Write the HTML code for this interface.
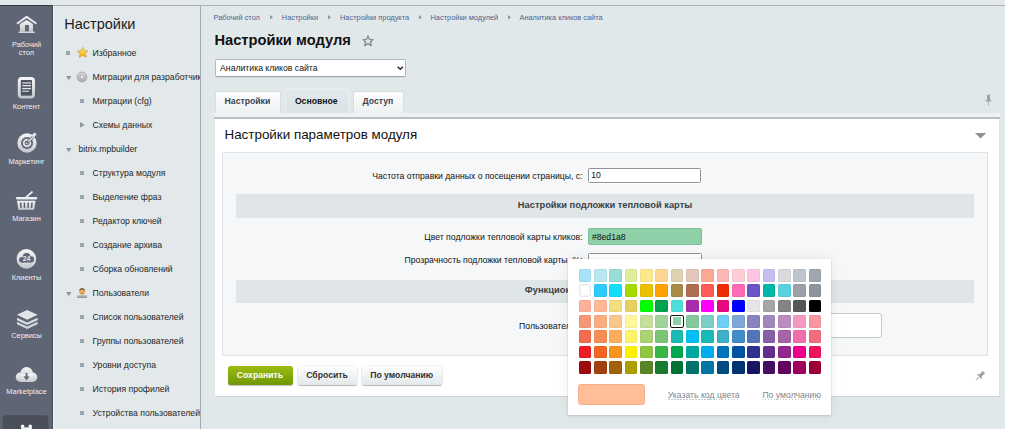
<!DOCTYPE html>
<html><head><meta charset="utf-8"><style>
html,body{margin:0;padding:0;width:1024px;height:429px;overflow:hidden;background:#fff}
body{position:relative;font-family:"Liberation Sans", sans-serif}
.t{position:absolute;white-space:nowrap}
.r{position:absolute}
</style></head><body>
<div class="r" style="left:0.00px;top:0.00px;width:1024.00px;height:429.00px;background:#fff"></div><div class="r" style="left:0.00px;top:0.00px;width:1005.00px;height:429.00px;background:#e1e8ea"></div><div class="r" style="left:0.00px;top:0.00px;width:1005.00px;height:5.00px;background:#e3e9eb"></div><div class="r" style="left:0.00px;top:5.00px;width:53.00px;height:424.00px;background:#5e6575"></div><div class="r" style="left:0.00px;top:5.00px;width:53.00px;height:1.00px;background:#323744"></div><div class="r" style="left:52.00px;top:5.00px;width:1.00px;height:424.00px;background:#454b58"></div><div class="r" style="left:53.00px;top:6.00px;width:1.00px;height:423.00px;background:#f2f5f6"></div><div class="r" style="left:53.00px;top:5.00px;width:952.00px;height:1.00px;background:#a9b1b4"></div><div class="r" style="left:54.00px;top:6.00px;width:146.00px;height:423.00px;background:#e3e9eb"></div><div class="r" style="left:200.00px;top:6.00px;width:1.00px;height:423.00px;background:#9dadbd"></div><div class="t" style="left:-13.50px;width:80px;text-align:center;top:40.64px;font-size:7.4px;line-height:7.4px;color:#eef1f4">Рабочий</div><div class="t" style="left:-13.50px;width:80px;text-align:center;top:49.04px;font-size:7.4px;line-height:7.4px;color:#eef1f4">стол</div><div class="t" style="left:-13.50px;width:80px;text-align:center;top:103.04px;font-size:7.4px;line-height:7.4px;color:#eef1f4">Контент</div><div class="t" style="left:-13.50px;width:80px;text-align:center;top:157.94px;font-size:7.4px;line-height:7.4px;color:#eef1f4">Маркетинг</div><div class="t" style="left:-13.50px;width:80px;text-align:center;top:215.04px;font-size:7.4px;line-height:7.4px;color:#eef1f4">Магазин</div><div class="t" style="left:-13.50px;width:80px;text-align:center;top:273.64px;font-size:7.4px;line-height:7.4px;color:#eef1f4">Клиенты</div><div class="t" style="left:-13.50px;width:80px;text-align:center;top:332.24px;font-size:7.4px;line-height:7.4px;color:#eef1f4">Сервисы</div><div class="t" style="left:-13.50px;width:80px;text-align:center;top:387.54px;font-size:7.4px;line-height:7.4px;color:#eef1f4">Marketplace</div>
<svg class="r" style="left:0;top:0" width="53" height="429" viewBox="0 0 53 429">
 <defs>
  <linearGradient id="g1" x1="0" y1="0" x2="0" y2="1"><stop offset="0" stop-color="#f4f5f6"/><stop offset="1" stop-color="#c4c7cc"/></linearGradient>
 </defs>
 <!-- house -->
 <path d="M17.6 23.2 L26.6 16.9 L35.8 23.2" fill="none" stroke="#e9ebee" stroke-width="1.9" stroke-linecap="round" stroke-linejoin="round"/>
 <path d="M19.9 24 L26.6 19.9 L33 24 L33 31.8 L19.9 31.8 Z" fill="url(#g1)"/>
 <rect x="25" y="25" width="3.9" height="6.8" fill="#5f6676"/>
 <rect x="18.4" y="31.6" width="16.4" height="1.5" rx="0.6" fill="#d5d8dc"/>
 <!-- content doc -->
 <rect x="19.3" y="78.5" width="14.2" height="18.5" rx="2.6" fill="none" stroke="url(#g1)" stroke-width="3"/>
 <rect x="21" y="80.2" width="10.8" height="15.2" fill="#4d5360"/>
 <rect x="22.2" y="82.3" width="8.8" height="1.3" fill="#d7dadd"/>
 <rect x="22.2" y="85" width="8.8" height="1.3" fill="#e6e8eb"/>
 <rect x="22.2" y="87.9" width="8.8" height="1.3" fill="#e6e8eb"/>
 <rect x="22.2" y="90.6" width="6.7" height="1.3" fill="#c9ccd0"/>
 <!-- marketing target -->
 <circle cx="27" cy="143" r="9.7" fill="url(#g1)"/>
 <circle cx="27" cy="143" r="6.0" fill="#5e6575"/>
 <circle cx="27" cy="143" r="4.3" fill="#d9dbdf"/>
 <circle cx="27" cy="143" r="2.3" fill="#5e6575"/>
 <circle cx="27" cy="143" r="1.3" fill="#cfd2d6"/>
 <path d="M27 143 L34.5 135.5" stroke="#5e6575" stroke-width="3"/>
 <path d="M28.3 141.7 L34.3 135.7" stroke="#e6e8eb" stroke-width="1.3"/>
 <path d="M31.5 135.2 L34.6 132.4 L36.6 134.4 L33.8 137.5 Z" fill="#e6e8eb"/>
 <!-- basket -->
 <path d="M26.4 197 L32 192" stroke="#e6e8eb" stroke-width="1.8" stroke-linecap="round"/>
 <rect x="15.9" y="196.9" width="21.4" height="2.5" rx="1.1" fill="#eceef0"/>
 <path d="M17 200.7 L35.5 200.7 L34.1 209.8 L18.4 209.8 Z" fill="url(#g1)"/>
 <path d="M19.8 202.5 L21.4 202.5 L21.8 208 L20.3 208 Z" fill="#5e6575"/>
 <path d="M23.6 202.5 L25.1 202.5 L25.2 208 L23.8 208 Z" fill="#5e6575"/>
 <path d="M27.5 202.5 L29 202.5 L28.8 208 L27.4 208 Z" fill="#5e6575"/>
 <path d="M31.2 202.5 L32.8 202.5 L32.3 208 L30.8 208 Z" fill="#5e6575"/>
 <!-- clients -->
 <circle cx="26.4" cy="258.9" r="9.8" fill="url(#g1)"/>
 <g fill="#5e6575"><circle cx="21.9" cy="259.7" r="2.8"/><circle cx="26.6" cy="256.9" r="3.8"/><circle cx="31" cy="259.3" r="3.1"/><rect x="21.9" y="258" width="9.1" height="4.5"/></g>
 <text x="26.6" y="261.2" font-family="Liberation Sans" font-size="6.8" font-weight="bold" fill="#e8eaed" text-anchor="middle">24</text>
 <!-- services layers -->
 <path d="M17 321.8 L27.1 326.6 L37.6 321.8 L37.6 324.2 L27.1 329 L17 324.2 Z" fill="#d3d6da"/>
 <path d="M17 317.8 L27.1 322.6 L37.6 317.8 L37.6 320.2 L27.1 325 L17 320.2 Z" fill="#d8dade"/>
 <path d="M27.1 309.9 L37.6 314.8 L27.1 319.7 L17 314.8 Z" fill="#e2e4e7"/>
 <!-- marketplace cloud -->
 <g fill="url(#g1)"><circle cx="20.6" cy="377.2" r="4.8"/><circle cx="26.6" cy="373.5" r="6.4"/><circle cx="32.6" cy="377.3" r="4.7"/><rect x="20.6" y="374" width="12" height="8"/></g>
 <rect x="25.6" y="373" width="1.9" height="4.5" fill="#5e6575"/>
 <path d="M23.4 376.6 L29.7 376.6 L26.55 380.2 Z" fill="#5e6575"/>
 <!-- bottom box -->
 <rect x="3.3" y="415.7" width="44.7" height="30" rx="2.2" fill="#4a4f5b" stroke="#41464f" stroke-width="0.6"/>
 <g fill="#f4f5f6"><circle cx="22.6" cy="426.2" r="1.7"/><circle cx="30.2" cy="426.2" r="1.7"/><path d="M21 426.5 L21.3 429 L31.8 429 L32 426.5 Q26.4 429.5 21 426.5 Z"/><rect x="22.6" y="427.4" width="7.6" height="1.6"/></g>
</svg><div class="t" style="left:64.30px;top:16.93px;font-size:14.5px;line-height:14.5px;color:#1c1c1c;font-weight:normal;">Настройки</div><div class="r" style="left:54px;top:6px;width:146px;height:423px;overflow:hidden"><div class="r" style="left:12.00px;top:45.00px;width:4.20px;height:3.70px;background:#9ca4ab"></div><svg class="r" style="left:22.599999999999994px;top:41.40px" width="11.5" height="11" viewBox="0 0 11 10.5"><defs><linearGradient id="sg" x1="0" y1="0" x2="0" y2="1"><stop offset="0" stop-color="#ffe680"/><stop offset="1" stop-color="#f0b010"/></linearGradient></defs><path d="M5.5 0.4 L7.1 3.5 L10.5 3.9 L8 6.3 L8.8 9.8 L5.5 8.1 L2.2 9.8 L3 6.3 L0.5 3.9 L3.9 3.5 Z" fill="url(#sg)" stroke="#d49a1c" stroke-width="0.7" stroke-linejoin="round"/></svg><div class="t" style="left:38.50px;top:42.76px;font-size:8.67px;line-height:8.67px;color:#262626;font-weight:normal;white-space:nowrap">Избранное</div><svg class="r" style="left:11.70px;top:69.80px" width="6" height="5"><path d="M0 0 L5.5 0 L2.75 4.3 Z" fill="#8e969d"/></svg><svg class="r" style="left:22.099999999999994px;top:64.80px" width="12" height="12" viewBox="0 0 12 12"><defs><linearGradient id="gg" x1="0" y1="0" x2="0" y2="1"><stop offset="0" stop-color="#e2e4e6"/><stop offset="1" stop-color="#a9adb1"/></linearGradient></defs><path d="M9.70 4.61 L10.90 5.01 L10.90 6.99 L9.70 7.39 L9.60 7.63 L10.17 8.76 L8.76 10.17 L7.63 9.60 L7.39 9.70 L6.99 10.90 L5.01 10.90 L4.61 9.70 L4.37 9.60 L3.24 10.17 L1.83 8.76 L2.40 7.63 L2.30 7.39 L1.10 6.99 L1.10 5.01 L2.30 4.61 L2.40 4.37 L1.83 3.24 L3.24 1.83 L4.37 2.40 L4.61 2.30 L5.01 1.10 L6.99 1.10 L7.39 2.30 L7.63 2.40 L8.76 1.83 L10.17 3.24 L9.60 4.37Z" fill="url(#gg)" stroke="#8d9297" stroke-width="0.7" stroke-linejoin="round"/><circle cx="6" cy="6" r="1.9" fill="#f3f4f5" stroke="#8d9297" stroke-width="0.7"/></svg><div class="t" style="left:38.50px;top:66.76px;font-size:8.67px;line-height:8.67px;color:#262626;font-weight:normal;white-space:nowrap">Миграции для разработчика</div><div class="r" style="left:26.00px;top:93.00px;width:4.20px;height:3.70px;background:#9ca4ab"></div><div class="t" style="left:38.50px;top:90.76px;font-size:8.67px;line-height:8.67px;color:#262626;font-weight:normal;white-space:nowrap">Миграции (cfg)</div><svg class="r" style="left:25.90px;top:115.80px" width="5" height="6"><path d="M0 0 L4.8 2.9 L0 5.8 Z" fill="#8e969d"/></svg><div class="t" style="left:38.50px;top:114.76px;font-size:8.67px;line-height:8.67px;color:#262626;font-weight:normal;white-space:nowrap">Схемы данных</div><svg class="r" style="left:11.70px;top:141.80px" width="6" height="5"><path d="M0 0 L5.5 0 L2.75 4.3 Z" fill="#8e969d"/></svg><div class="t" style="left:24.50px;top:138.76px;font-size:8.67px;line-height:8.67px;color:#262626;font-weight:normal;white-space:nowrap">bitrix.mpbuilder</div><div class="r" style="left:26.00px;top:165.00px;width:4.20px;height:3.70px;background:#9ca4ab"></div><div class="t" style="left:38.50px;top:162.76px;font-size:8.67px;line-height:8.67px;color:#262626;font-weight:normal;white-space:nowrap">Структура модуля</div><div class="r" style="left:26.00px;top:189.00px;width:4.20px;height:3.70px;background:#9ca4ab"></div><div class="t" style="left:38.50px;top:186.76px;font-size:8.67px;line-height:8.67px;color:#262626;font-weight:normal;white-space:nowrap">Выделение фраз</div><div class="r" style="left:26.00px;top:213.00px;width:4.20px;height:3.70px;background:#9ca4ab"></div><div class="t" style="left:38.50px;top:210.76px;font-size:8.67px;line-height:8.67px;color:#262626;font-weight:normal;white-space:nowrap">Редактор ключей</div><div class="r" style="left:26.00px;top:237.00px;width:4.20px;height:3.70px;background:#9ca4ab"></div><div class="t" style="left:38.50px;top:234.76px;font-size:8.67px;line-height:8.67px;color:#262626;font-weight:normal;white-space:nowrap">Создание архива</div><div class="r" style="left:26.00px;top:261.00px;width:4.20px;height:3.70px;background:#9ca4ab"></div><div class="t" style="left:38.50px;top:258.76px;font-size:8.67px;line-height:8.67px;color:#262626;font-weight:normal;white-space:nowrap">Сборка обновлений</div><svg class="r" style="left:11.70px;top:285.80px" width="6" height="5"><path d="M0 0 L5.5 0 L2.75 4.3 Z" fill="#8e969d"/></svg><svg class="r" style="left:22.900000000000006px;top:281.50px" width="10.2" height="10.6" viewBox="0 0 10.2 10.6"><defs><linearGradient id="ug" x1="0" y1="0" x2="0" y2="1"><stop offset="0" stop-color="#d4d6d8"/><stop offset="1" stop-color="#7f8286"/></linearGradient><linearGradient id="fg" x1="0" y1="0" x2="0" y2="1"><stop offset="0" stop-color="#f5c68a"/><stop offset="1" stop-color="#d88e2c"/></linearGradient></defs><ellipse cx="5.1" cy="3.6" rx="2.8" ry="3.3" fill="url(#fg)"/><path d="M2.3 3 Q2.2 0.2 5.1 0.2 Q8 0.2 7.9 3 Q7.2 1.4 5.1 1.5 Q3 1.4 2.3 3 Z" fill="#5b4530"/><rect x="0" y="6.5" width="10" height="4" rx="1.4" fill="url(#ug)"/></svg><div class="t" style="left:38.50px;top:282.76px;font-size:8.67px;line-height:8.67px;color:#262626;font-weight:normal;white-space:nowrap">Пользователи</div><div class="r" style="left:26.00px;top:309.00px;width:4.20px;height:3.70px;background:#9ca4ab"></div><div class="t" style="left:38.50px;top:306.76px;font-size:8.67px;line-height:8.67px;color:#262626;font-weight:normal;white-space:nowrap">Список пользователей</div><div class="r" style="left:26.00px;top:333.00px;width:4.20px;height:3.70px;background:#9ca4ab"></div><div class="t" style="left:38.50px;top:330.76px;font-size:8.67px;line-height:8.67px;color:#262626;font-weight:normal;white-space:nowrap">Группы пользователей</div><div class="r" style="left:26.00px;top:357.00px;width:4.20px;height:3.70px;background:#9ca4ab"></div><div class="t" style="left:38.50px;top:354.76px;font-size:8.67px;line-height:8.67px;color:#262626;font-weight:normal;white-space:nowrap">Уровни доступа</div><div class="r" style="left:26.00px;top:381.00px;width:4.20px;height:3.70px;background:#9ca4ab"></div><div class="t" style="left:38.50px;top:378.76px;font-size:8.67px;line-height:8.67px;color:#262626;font-weight:normal;white-space:nowrap">История профилей</div><div class="r" style="left:26.00px;top:405.00px;width:4.20px;height:3.70px;background:#9ca4ab"></div><div class="t" style="left:38.50px;top:402.76px;font-size:8.67px;line-height:8.67px;color:#262626;font-weight:normal;white-space:nowrap">Устройства пользователей</div></div><div class="t" style="left:213.50px;top:13.84px;font-size:7.4px;line-height:7.4px;color:#4e6490;font-weight:normal;">Рабочий стол</div><div class="t" style="left:281.80px;top:13.84px;font-size:7.4px;line-height:7.4px;color:#4e6490;font-weight:normal;">Настройки</div><div class="t" style="left:340.00px;top:13.84px;font-size:7.4px;line-height:7.4px;color:#4e6490;font-weight:normal;">Настройки продукта</div><div class="t" style="left:430.50px;top:13.84px;font-size:7.4px;line-height:7.4px;color:#4e6490;font-weight:normal;">Настройки модулей</div><div class="t" style="left:519.50px;top:13.84px;font-size:7.4px;line-height:7.4px;color:#4e6490;font-weight:normal;">Аналитика кликов сайта</div><svg class="r" style="left:269.8px;top:15.2px" width="4" height="5"><path d="M0 0 L3 2.3 L0 4.6Z" fill="#8f979d"/></svg><svg class="r" style="left:328px;top:15.2px" width="4" height="5"><path d="M0 0 L3 2.3 L0 4.6Z" fill="#8f979d"/></svg><svg class="r" style="left:419px;top:15.2px" width="4" height="5"><path d="M0 0 L3 2.3 L0 4.6Z" fill="#8f979d"/></svg><svg class="r" style="left:508.2px;top:15.2px" width="4" height="5"><path d="M0 0 L3 2.3 L0 4.6Z" fill="#8f979d"/></svg><div class="t" style="left:214.40px;top:32.66px;font-size:14.7px;line-height:14.7px;color:#111;font-weight:bold;">Настройки модуля</div><svg class="r" style="left:361.8px;top:34.8px" width="12" height="12" viewBox="0 0 12 12"><path d="M6 1.0 L7.5 4.3 L11.0 4.6 L8.4 6.9 L9.2 10.6 L6 8.7 L2.8 10.6 L3.6 6.9 L1.0 4.6 L4.5 4.3 Z" fill="none" stroke="#868d94" stroke-width="1.35" stroke-linejoin="round"/></svg><div class="r" style="left:214.50px;top:58.90px;width:191.80px;height:17.70px;background:#fff;border:1px solid #b5babe;border-bottom-color:#9ea3a7;border-radius:2px;box-sizing:border-box;box-shadow:0 0.5px 0 rgba(0,0,0,.08)"></div><div class="t" style="left:220.10px;top:63.96px;font-size:8.67px;line-height:8.67px;color:#111;font-weight:normal;">Аналитика кликов сайта</div><svg class="r" style="left:397.3px;top:66px" width="7" height="4.5"><path d="M0.7 0.7 L3.3 3.3 L5.9 0.7" fill="none" stroke="#222" stroke-width="1.4"/></svg><div class="r" style="left:214.50px;top:91.00px;width:66.10px;height:22.30px;background:linear-gradient(#fdfefe,#eef1f2);border:1px solid #d8dde0;border-bottom:none;border-radius:2.5px 2.5px 0 0;box-sizing:border-box"></div><div class="r" style="left:285.20px;top:87.90px;width:63.60px;height:25.40px;background:linear-gradient(#e3e9eb,#dbe2e5);border:1px solid #e9eef0;border-bottom:none;border-radius:2.5px 2.5px 0 0;box-sizing:border-box"></div><div class="r" style="left:352.70px;top:91.00px;width:51.60px;height:22.30px;background:linear-gradient(#fdfefe,#eef1f2);border:1px solid #d8dde0;border-bottom:none;border-radius:2.5px 2.5px 0 0;box-sizing:border-box"></div><div class="t" style="left:224.60px;top:97.36px;font-size:8.67px;line-height:8.67px;color:#3b4450;font-weight:bold;">Настройки</div><div class="t" style="left:294.90px;top:96.76px;font-size:8.67px;line-height:8.67px;color:#111;font-weight:bold;">Основное</div><div class="t" style="left:362.60px;top:97.36px;font-size:8.67px;line-height:8.67px;color:#3b4450;font-weight:bold;">Доступ</div><svg class="r" style="left:984px;top:94px" width="9" height="13" viewBox="0 0 9 13"><path d="M2.5 0.8 L6.5 0.8 L6 1.8 L6 5.5 L8 7.5 L1 7.5 L3 5.5 L3 1.8 Z" fill="#9aa1a7"/><rect x="4.1" y="7.5" width="0.9" height="4" fill="#a3a9ae"/></svg><div class="r" style="left:214.00px;top:112.90px;width:786.00px;height:4.30px;background:#eef2f3"></div><div class="r" style="left:214.00px;top:117.20px;width:786.00px;height:1.60px;background:#b9c0c3"></div><div class="r" style="left:214.60px;top:118.80px;width:785.40px;height:277.20px;background:#fff"></div><div class="r" style="left:999.00px;top:118.80px;width:1.00px;height:277.20px;background:#dfe3e5"></div><div class="r" style="left:214.60px;top:396.00px;width:785.40px;height:1.00px;background:#cdd4d7"></div><div class="t" style="left:224.50px;top:128.46px;font-size:13.4px;line-height:13.4px;color:#111;font-weight:normal;">Настройки параметров модуля</div><svg class="r" style="left:975px;top:132.6px" width="11.5" height="6"><path d="M0 0 L11.2 0 L5.6 5.6Z" fill="#8d9297"/></svg><div class="r" style="left:222.00px;top:152.00px;width:766.00px;height:204.00px;background:#f5f7f8;border:1px solid #dfe3e5;box-sizing:border-box"></div><div class="t" style="right:441.50px;top:171.66px;font-size:8.67px;line-height:8.67px;color:#111;font-weight:normal;white-space:nowrap">Частота отправки данных о посещении страницы, с:</div><div class="r" style="left:588.00px;top:168.20px;width:113.30px;height:14.60px;background:#fff;border:1px solid #8e9498;border-radius:1.5px;box-sizing:border-box;box-shadow:0 1px 0 #fff"></div><div class="t" style="left:591.20px;top:171.16px;font-size:8.67px;line-height:8.67px;color:#111;font-weight:normal;">10</div><div class="r" style="left:235.60px;top:194.10px;width:738.80px;height:23.70px;background:#e0e6e8"></div><div class="t" style="left:305.00px;width:600px;text-align:center;top:200.70px;font-size:9.33px;line-height:9.33px;color:#3a4249;font-weight:bold;white-space:nowrap">Настройки подложки тепловой карты</div><div class="t" style="right:441.50px;top:232.96px;font-size:8.67px;line-height:8.67px;color:#111;font-weight:normal;white-space:nowrap">Цвет подложки тепловой карты кликов:</div><div class="r" style="left:588.00px;top:228.00px;width:114.00px;height:17.00px;background:#8ed1a8;border:1px solid #7fbf98;border-radius:2px;box-sizing:border-box"></div><div class="t" style="left:591.90px;top:232.56px;font-size:8.67px;line-height:8.67px;color:#111;font-weight:normal;">#8ed1a8</div><div class="t" style="right:441.50px;top:256.21px;font-size:8.67px;line-height:8.67px;color:#111;font-weight:normal;white-space:nowrap">Прозрачность подложки тепловой карты, %:</div><div class="r" style="left:588.00px;top:253.40px;width:114.00px;height:15.00px;background:#fff;border:1px solid #8e9498;border-radius:1.5px;box-sizing:border-box"></div><div class="r" style="left:235.60px;top:279.50px;width:738.80px;height:23.10px;background:#e0e6e8"></div><div class="t" style="left:524.80px;top:286.10px;font-size:9.33px;line-height:9.33px;color:#3a4249;font-weight:bold;">Функциональные возможности</div><div class="t" style="left:519.10px;top:321.86px;font-size:8.67px;line-height:8.67px;color:#111;font-weight:normal;">Пользовательские события:</div><div class="r" style="left:588.00px;top:312.70px;width:294.00px;height:25.40px;background:#fff;border:1px solid #c5cacd;border-radius:3px;box-sizing:border-box"></div><div class="r" style="left:228.20px;top:366.00px;width:64.90px;height:19.30px;background:linear-gradient(#9bbd10,#6f9607);border-radius:2.5px;box-shadow:0 1px 1px rgba(0,0,0,.25)"></div><div class="t" style="left:236.80px;top:370.96px;font-size:8.67px;line-height:8.67px;color:#fff;font-weight:bold;">Сохранить</div><div class="r" style="left:297.60px;top:366.00px;width:59.10px;height:19.30px;background:linear-gradient(#fdfefe,#e3e8ea);border-radius:2.5px;box-shadow:0 1px 1px rgba(0,0,0,.25),0 0 0 0.6px rgba(0,0,0,.1)"></div><div class="t" style="left:306.20px;top:370.96px;font-size:8.67px;line-height:8.67px;color:#333;font-weight:bold;">Сбросить</div><div class="r" style="left:361.60px;top:366.00px;width:80.80px;height:19.30px;background:linear-gradient(#fdfefe,#e3e8ea);border-radius:2.5px;box-shadow:0 1px 1px rgba(0,0,0,.25),0 0 0 0.6px rgba(0,0,0,.1)"></div><div class="t" style="left:370.20px;top:370.96px;font-size:8.67px;line-height:8.67px;color:#333;font-weight:bold;">По умолчанию</div><svg class="r" style="left:973.5px;top:370.4px" width="12" height="12" viewBox="0 0 12 12"><g transform="rotate(45 6 6)"><path d="M4 0.5 L8 0.5 L7.5 1.5 L7.5 5 L9.5 7 L2.5 7 L4.5 5 L4.5 1.5 Z" fill="#9aa1a7"/><rect x="5.6" y="7" width="0.9" height="4.5" fill="#9aa1a7"/></g></svg><div class="r" style="left:568.20px;top:259.00px;width:262.80px;height:155.90px;background:#fff;box-shadow:0 0 12px rgba(0,0,0,.07),0 1px 2px rgba(0,0,0,.1),0 0 1px rgba(0,0,0,.12)"></div><div class="r" style="left:578.60px;top:269.00px;width:12.67px;height:12.67px;background:#a6e3f7;border-radius:1.6px;box-shadow:inset 0 0 0 0.7px rgba(0,0,0,.06);"></div><div class="r" style="left:593.93px;top:269.00px;width:12.67px;height:12.67px;background:#b8e8ee;border-radius:1.6px;box-shadow:inset 0 0 0 0.7px rgba(0,0,0,.06);"></div><div class="r" style="left:609.26px;top:269.00px;width:12.67px;height:12.67px;background:#98ddd8;border-radius:1.6px;box-shadow:inset 0 0 0 0.7px rgba(0,0,0,.06);"></div><div class="r" style="left:624.59px;top:269.00px;width:12.67px;height:12.67px;background:#e0ed9b;border-radius:1.6px;box-shadow:inset 0 0 0 0.7px rgba(0,0,0,.06);"></div><div class="r" style="left:639.92px;top:269.00px;width:12.67px;height:12.67px;background:#fde98b;border-radius:1.6px;box-shadow:inset 0 0 0 0.7px rgba(0,0,0,.06);"></div><div class="r" style="left:655.25px;top:269.00px;width:12.67px;height:12.67px;background:#fdd792;border-radius:1.6px;box-shadow:inset 0 0 0 0.7px rgba(0,0,0,.06);"></div><div class="r" style="left:670.58px;top:269.00px;width:12.67px;height:12.67px;background:#dcd2b2;border-radius:1.6px;box-shadow:inset 0 0 0 0.7px rgba(0,0,0,.06);"></div><div class="r" style="left:685.91px;top:269.00px;width:12.67px;height:12.67px;background:#e2c6ba;border-radius:1.6px;box-shadow:inset 0 0 0 0.7px rgba(0,0,0,.06);"></div><div class="r" style="left:701.24px;top:269.00px;width:12.67px;height:12.67px;background:#fda891;border-radius:1.6px;box-shadow:inset 0 0 0 0.7px rgba(0,0,0,.06);"></div><div class="r" style="left:716.57px;top:269.00px;width:12.67px;height:12.67px;background:#fdb8b6;border-radius:1.6px;box-shadow:inset 0 0 0 0.7px rgba(0,0,0,.06);"></div><div class="r" style="left:731.90px;top:269.00px;width:12.67px;height:12.67px;background:#fdcdd6;border-radius:1.6px;box-shadow:inset 0 0 0 0.7px rgba(0,0,0,.06);"></div><div class="r" style="left:747.23px;top:269.00px;width:12.67px;height:12.67px;background:#fec5e3;border-radius:1.6px;box-shadow:inset 0 0 0 0.7px rgba(0,0,0,.06);"></div><div class="r" style="left:762.56px;top:269.00px;width:12.67px;height:12.67px;background:#c6bff0;border-radius:1.6px;box-shadow:inset 0 0 0 0.7px rgba(0,0,0,.06);"></div><div class="r" style="left:777.89px;top:269.00px;width:12.67px;height:12.67px;background:#d9dadd;border-radius:1.6px;box-shadow:inset 0 0 0 0.7px rgba(0,0,0,.06);"></div><div class="r" style="left:793.22px;top:269.00px;width:12.67px;height:12.67px;background:#bfc5cc;border-radius:1.6px;box-shadow:inset 0 0 0 0.7px rgba(0,0,0,.06);"></div><div class="r" style="left:808.55px;top:269.00px;width:12.67px;height:12.67px;background:#a0a6ad;border-radius:1.6px;box-shadow:inset 0 0 0 0.7px rgba(0,0,0,.06);"></div><div class="r" style="left:578.60px;top:284.33px;width:12.67px;height:12.67px;background:#ffffff;border-radius:1.6px;box-shadow:inset 0 0 0 0.7px rgba(0,0,0,.06);border:1px solid #ececec;box-sizing:border-box;"></div><div class="r" style="left:593.93px;top:284.33px;width:12.67px;height:12.67px;background:#2ecbff;border-radius:1.6px;box-shadow:inset 0 0 0 0.7px rgba(0,0,0,.06);"></div><div class="r" style="left:609.26px;top:284.33px;width:12.67px;height:12.67px;background:#10defb;border-radius:1.6px;box-shadow:inset 0 0 0 0.7px rgba(0,0,0,.06);"></div><div class="r" style="left:624.59px;top:284.33px;width:12.67px;height:12.67px;background:#a4db00;border-radius:1.6px;box-shadow:inset 0 0 0 0.7px rgba(0,0,0,.06);"></div><div class="r" style="left:639.92px;top:284.33px;width:12.67px;height:12.67px;background:#ebc000;border-radius:1.6px;box-shadow:inset 0 0 0 0.7px rgba(0,0,0,.06);"></div><div class="r" style="left:655.25px;top:284.33px;width:12.67px;height:12.67px;background:#ffa100;border-radius:1.6px;box-shadow:inset 0 0 0 0.7px rgba(0,0,0,.06);"></div><div class="r" style="left:670.58px;top:284.33px;width:12.67px;height:12.67px;background:#a68a48;border-radius:1.6px;box-shadow:inset 0 0 0 0.7px rgba(0,0,0,.06);"></div><div class="r" style="left:685.91px;top:284.33px;width:12.67px;height:12.67px;background:#b06e50;border-radius:1.6px;box-shadow:inset 0 0 0 0.7px rgba(0,0,0,.06);"></div><div class="r" style="left:701.24px;top:284.33px;width:12.67px;height:12.67px;background:#ff5a55;border-radius:1.6px;box-shadow:inset 0 0 0 0.7px rgba(0,0,0,.06);"></div><div class="r" style="left:716.57px;top:284.33px;width:12.67px;height:12.67px;background:#ee2e00;border-radius:1.6px;box-shadow:inset 0 0 0 0.7px rgba(0,0,0,.06);"></div><div class="r" style="left:731.90px;top:284.33px;width:12.67px;height:12.67px;background:#ff6ab5;border-radius:1.6px;box-shadow:inset 0 0 0 0.7px rgba(0,0,0,.06);"></div><div class="r" style="left:747.23px;top:284.33px;width:12.67px;height:12.67px;background:#6a55c9;border-radius:1.6px;box-shadow:inset 0 0 0 0.7px rgba(0,0,0,.06);"></div><div class="r" style="left:762.56px;top:284.33px;width:12.67px;height:12.67px;background:#00b8a9;border-radius:1.6px;box-shadow:inset 0 0 0 0.7px rgba(0,0,0,.06);"></div><div class="r" style="left:777.89px;top:284.33px;width:12.67px;height:12.67px;background:#5ad1df;border-radius:1.6px;box-shadow:inset 0 0 0 0.7px rgba(0,0,0,.06);"></div><div class="r" style="left:793.22px;top:284.33px;width:12.67px;height:12.67px;background:#9ca1a7;border-radius:1.6px;box-shadow:inset 0 0 0 0.7px rgba(0,0,0,.06);"></div><div class="r" style="left:808.55px;top:284.33px;width:12.67px;height:12.67px;background:#8c949e;border-radius:1.6px;box-shadow:inset 0 0 0 0.7px rgba(0,0,0,.06);"></div><div class="r" style="left:578.60px;top:299.66px;width:12.67px;height:12.67px;background:#ffb09a;border-radius:1.6px;box-shadow:inset 0 0 0 0.7px rgba(0,0,0,.06);"></div><div class="r" style="left:593.93px;top:299.66px;width:12.67px;height:12.67px;background:#ffb794;border-radius:1.6px;box-shadow:inset 0 0 0 0.7px rgba(0,0,0,.06);"></div><div class="r" style="left:609.26px;top:299.66px;width:12.67px;height:12.67px;background:#f2df7e;border-radius:1.6px;box-shadow:inset 0 0 0 0.7px rgba(0,0,0,.06);"></div><div class="r" style="left:624.59px;top:299.66px;width:12.67px;height:12.67px;background:#e8d05c;border-radius:1.6px;box-shadow:inset 0 0 0 0.7px rgba(0,0,0,.06);"></div><div class="r" style="left:639.92px;top:299.66px;width:12.67px;height:12.67px;background:#00ff00;border-radius:1.6px;box-shadow:inset 0 0 0 0.7px rgba(0,0,0,.06);"></div><div class="r" style="left:655.25px;top:299.66px;width:12.67px;height:12.67px;background:#00a24e;border-radius:1.6px;box-shadow:inset 0 0 0 0.7px rgba(0,0,0,.06);"></div><div class="r" style="left:670.58px;top:299.66px;width:12.67px;height:12.67px;background:#4ddfdc;border-radius:1.6px;box-shadow:inset 0 0 0 0.7px rgba(0,0,0,.06);"></div><div class="r" style="left:685.91px;top:299.66px;width:12.67px;height:12.67px;background:#aa2cae;border-radius:1.6px;box-shadow:inset 0 0 0 0.7px rgba(0,0,0,.06);"></div><div class="r" style="left:701.24px;top:299.66px;width:12.67px;height:12.67px;background:#ff00ff;border-radius:1.6px;box-shadow:inset 0 0 0 0.7px rgba(0,0,0,.06);"></div><div class="r" style="left:716.57px;top:299.66px;width:12.67px;height:12.67px;background:#e9087f;border-radius:1.6px;box-shadow:inset 0 0 0 0.7px rgba(0,0,0,.06);"></div><div class="r" style="left:731.90px;top:299.66px;width:12.67px;height:12.67px;background:#0000ff;border-radius:1.6px;box-shadow:inset 0 0 0 0.7px rgba(0,0,0,.06);"></div><div class="r" style="left:747.23px;top:299.66px;width:12.67px;height:12.67px;background:#e6e6e6;border-radius:1.6px;box-shadow:inset 0 0 0 0.7px rgba(0,0,0,.06);"></div><div class="r" style="left:762.56px;top:299.66px;width:12.67px;height:12.67px;background:#a6a6a6;border-radius:1.6px;box-shadow:inset 0 0 0 0.7px rgba(0,0,0,.06);"></div><div class="r" style="left:777.89px;top:299.66px;width:12.67px;height:12.67px;background:#848484;border-radius:1.6px;box-shadow:inset 0 0 0 0.7px rgba(0,0,0,.06);"></div><div class="r" style="left:793.22px;top:299.66px;width:12.67px;height:12.67px;background:#565656;border-radius:1.6px;box-shadow:inset 0 0 0 0.7px rgba(0,0,0,.06);"></div><div class="r" style="left:808.55px;top:299.66px;width:12.67px;height:12.67px;background:#000000;border-radius:1.6px;box-shadow:inset 0 0 0 0.7px rgba(0,0,0,.06);"></div><div class="r" style="left:578.60px;top:314.99px;width:12.67px;height:12.67px;background:#f7977a;border-radius:1.6px;box-shadow:inset 0 0 0 0.7px rgba(0,0,0,.06);"></div><div class="r" style="left:593.93px;top:314.99px;width:12.67px;height:12.67px;background:#f9ad81;border-radius:1.6px;box-shadow:inset 0 0 0 0.7px rgba(0,0,0,.06);"></div><div class="r" style="left:609.26px;top:314.99px;width:12.67px;height:12.67px;background:#fdc68a;border-radius:1.6px;box-shadow:inset 0 0 0 0.7px rgba(0,0,0,.06);"></div><div class="r" style="left:624.59px;top:314.99px;width:12.67px;height:12.67px;background:#fff79a;border-radius:1.6px;box-shadow:inset 0 0 0 0.7px rgba(0,0,0,.06);"></div><div class="r" style="left:639.92px;top:314.99px;width:12.67px;height:12.67px;background:#c4df9b;border-radius:1.6px;box-shadow:inset 0 0 0 0.7px rgba(0,0,0,.06);"></div><div class="r" style="left:655.25px;top:314.99px;width:12.67px;height:12.67px;background:#a2d39c;border-radius:1.6px;box-shadow:inset 0 0 0 0.7px rgba(0,0,0,.06);"></div><div class="r" style="left:670.58px;top:314.99px;width:12.67px;height:12.67px;background:#8ed1a8;border-radius:1.6px;box-shadow:inset 0 0 0 0.7px rgba(0,0,0,.06);"></div><div class="r" style="left:685.91px;top:314.99px;width:12.67px;height:12.67px;background:#82ca9d;border-radius:1.6px;box-shadow:inset 0 0 0 0.7px rgba(0,0,0,.06);"></div><div class="r" style="left:701.24px;top:314.99px;width:12.67px;height:12.67px;background:#7bcdc8;border-radius:1.6px;box-shadow:inset 0 0 0 0.7px rgba(0,0,0,.06);"></div><div class="r" style="left:716.57px;top:314.99px;width:12.67px;height:12.67px;background:#6ecff6;border-radius:1.6px;box-shadow:inset 0 0 0 0.7px rgba(0,0,0,.06);"></div><div class="r" style="left:731.90px;top:314.99px;width:12.67px;height:12.67px;background:#7ea7d8;border-radius:1.6px;box-shadow:inset 0 0 0 0.7px rgba(0,0,0,.06);"></div><div class="r" style="left:747.23px;top:314.99px;width:12.67px;height:12.67px;background:#8882be;border-radius:1.6px;box-shadow:inset 0 0 0 0.7px rgba(0,0,0,.06);"></div><div class="r" style="left:762.56px;top:314.99px;width:12.67px;height:12.67px;background:#a187be;border-radius:1.6px;box-shadow:inset 0 0 0 0.7px rgba(0,0,0,.06);"></div><div class="r" style="left:777.89px;top:314.99px;width:12.67px;height:12.67px;background:#bc8cbf;border-radius:1.6px;box-shadow:inset 0 0 0 0.7px rgba(0,0,0,.06);"></div><div class="r" style="left:793.22px;top:314.99px;width:12.67px;height:12.67px;background:#f49ac2;border-radius:1.6px;box-shadow:inset 0 0 0 0.7px rgba(0,0,0,.06);"></div><div class="r" style="left:808.55px;top:314.99px;width:12.67px;height:12.67px;background:#f6989d;border-radius:1.6px;box-shadow:inset 0 0 0 0.7px rgba(0,0,0,.06);"></div><div class="r" style="left:578.60px;top:330.32px;width:12.67px;height:12.67px;background:#f26c4f;border-radius:1.6px;box-shadow:inset 0 0 0 0.7px rgba(0,0,0,.06);"></div><div class="r" style="left:593.93px;top:330.32px;width:12.67px;height:12.67px;background:#f68e55;border-radius:1.6px;box-shadow:inset 0 0 0 0.7px rgba(0,0,0,.06);"></div><div class="r" style="left:609.26px;top:330.32px;width:12.67px;height:12.67px;background:#fbaf5c;border-radius:1.6px;box-shadow:inset 0 0 0 0.7px rgba(0,0,0,.06);"></div><div class="r" style="left:624.59px;top:330.32px;width:12.67px;height:12.67px;background:#fff467;border-radius:1.6px;box-shadow:inset 0 0 0 0.7px rgba(0,0,0,.06);"></div><div class="r" style="left:639.92px;top:330.32px;width:12.67px;height:12.67px;background:#acd372;border-radius:1.6px;box-shadow:inset 0 0 0 0.7px rgba(0,0,0,.06);"></div><div class="r" style="left:655.25px;top:330.32px;width:12.67px;height:12.67px;background:#7cc576;border-radius:1.6px;box-shadow:inset 0 0 0 0.7px rgba(0,0,0,.06);"></div><div class="r" style="left:670.58px;top:330.32px;width:12.67px;height:12.67px;background:#1abbb4;border-radius:1.6px;box-shadow:inset 0 0 0 0.7px rgba(0,0,0,.06);"></div><div class="r" style="left:685.91px;top:330.32px;width:12.67px;height:12.67px;background:#00bff3;border-radius:1.6px;box-shadow:inset 0 0 0 0.7px rgba(0,0,0,.06);"></div><div class="r" style="left:701.24px;top:330.32px;width:12.67px;height:12.67px;background:#1abbb4;border-radius:1.6px;box-shadow:inset 0 0 0 0.7px rgba(0,0,0,.06);"></div><div class="r" style="left:716.57px;top:330.32px;width:12.67px;height:12.67px;background:#3bb0c9;border-radius:1.6px;box-shadow:inset 0 0 0 0.7px rgba(0,0,0,.06);"></div><div class="r" style="left:731.90px;top:330.32px;width:12.67px;height:12.67px;background:#438cca;border-radius:1.6px;box-shadow:inset 0 0 0 0.7px rgba(0,0,0,.06);"></div><div class="r" style="left:747.23px;top:330.32px;width:12.67px;height:12.67px;background:#5574b9;border-radius:1.6px;box-shadow:inset 0 0 0 0.7px rgba(0,0,0,.06);"></div><div class="r" style="left:762.56px;top:330.32px;width:12.67px;height:12.67px;background:#855fa8;border-radius:1.6px;box-shadow:inset 0 0 0 0.7px rgba(0,0,0,.06);"></div><div class="r" style="left:777.89px;top:330.32px;width:12.67px;height:12.67px;background:#a763a8;border-radius:1.6px;box-shadow:inset 0 0 0 0.7px rgba(0,0,0,.06);"></div><div class="r" style="left:793.22px;top:330.32px;width:12.67px;height:12.67px;background:#f06ea9;border-radius:1.6px;box-shadow:inset 0 0 0 0.7px rgba(0,0,0,.06);"></div><div class="r" style="left:808.55px;top:330.32px;width:12.67px;height:12.67px;background:#f26d7d;border-radius:1.6px;box-shadow:inset 0 0 0 0.7px rgba(0,0,0,.06);"></div><div class="r" style="left:578.60px;top:345.65px;width:12.67px;height:12.67px;background:#ed1c24;border-radius:1.6px;box-shadow:inset 0 0 0 0.7px rgba(0,0,0,.06);"></div><div class="r" style="left:593.93px;top:345.65px;width:12.67px;height:12.67px;background:#f26522;border-radius:1.6px;box-shadow:inset 0 0 0 0.7px rgba(0,0,0,.06);"></div><div class="r" style="left:609.26px;top:345.65px;width:12.67px;height:12.67px;background:#f7941d;border-radius:1.6px;box-shadow:inset 0 0 0 0.7px rgba(0,0,0,.06);"></div><div class="r" style="left:624.59px;top:345.65px;width:12.67px;height:12.67px;background:#fff200;border-radius:1.6px;box-shadow:inset 0 0 0 0.7px rgba(0,0,0,.06);"></div><div class="r" style="left:639.92px;top:345.65px;width:12.67px;height:12.67px;background:#8dc73f;border-radius:1.6px;box-shadow:inset 0 0 0 0.7px rgba(0,0,0,.06);"></div><div class="r" style="left:655.25px;top:345.65px;width:12.67px;height:12.67px;background:#39b54a;border-radius:1.6px;box-shadow:inset 0 0 0 0.7px rgba(0,0,0,.06);"></div><div class="r" style="left:670.58px;top:345.65px;width:12.67px;height:12.67px;background:#00a651;border-radius:1.6px;box-shadow:inset 0 0 0 0.7px rgba(0,0,0,.06);"></div><div class="r" style="left:685.91px;top:345.65px;width:12.67px;height:12.67px;background:#00a99d;border-radius:1.6px;box-shadow:inset 0 0 0 0.7px rgba(0,0,0,.06);"></div><div class="r" style="left:701.24px;top:345.65px;width:12.67px;height:12.67px;background:#00aeef;border-radius:1.6px;box-shadow:inset 0 0 0 0.7px rgba(0,0,0,.06);"></div><div class="r" style="left:716.57px;top:345.65px;width:12.67px;height:12.67px;background:#0072bc;border-radius:1.6px;box-shadow:inset 0 0 0 0.7px rgba(0,0,0,.06);"></div><div class="r" style="left:731.90px;top:345.65px;width:12.67px;height:12.67px;background:#0054a6;border-radius:1.6px;box-shadow:inset 0 0 0 0.7px rgba(0,0,0,.06);"></div><div class="r" style="left:747.23px;top:345.65px;width:12.67px;height:12.67px;background:#2e3192;border-radius:1.6px;box-shadow:inset 0 0 0 0.7px rgba(0,0,0,.06);"></div><div class="r" style="left:762.56px;top:345.65px;width:12.67px;height:12.67px;background:#662d91;border-radius:1.6px;box-shadow:inset 0 0 0 0.7px rgba(0,0,0,.06);"></div><div class="r" style="left:777.89px;top:345.65px;width:12.67px;height:12.67px;background:#92278f;border-radius:1.6px;box-shadow:inset 0 0 0 0.7px rgba(0,0,0,.06);"></div><div class="r" style="left:793.22px;top:345.65px;width:12.67px;height:12.67px;background:#ec008c;border-radius:1.6px;box-shadow:inset 0 0 0 0.7px rgba(0,0,0,.06);"></div><div class="r" style="left:808.55px;top:345.65px;width:12.67px;height:12.67px;background:#ed145b;border-radius:1.6px;box-shadow:inset 0 0 0 0.7px rgba(0,0,0,.06);"></div><div class="r" style="left:578.60px;top:360.98px;width:12.67px;height:12.67px;background:#9e0b0f;border-radius:1.6px;box-shadow:inset 0 0 0 0.7px rgba(0,0,0,.06);"></div><div class="r" style="left:593.93px;top:360.98px;width:12.67px;height:12.67px;background:#a0410d;border-radius:1.6px;box-shadow:inset 0 0 0 0.7px rgba(0,0,0,.06);"></div><div class="r" style="left:609.26px;top:360.98px;width:12.67px;height:12.67px;background:#a36209;border-radius:1.6px;box-shadow:inset 0 0 0 0.7px rgba(0,0,0,.06);"></div><div class="r" style="left:624.59px;top:360.98px;width:12.67px;height:12.67px;background:#aba000;border-radius:1.6px;box-shadow:inset 0 0 0 0.7px rgba(0,0,0,.06);"></div><div class="r" style="left:639.92px;top:360.98px;width:12.67px;height:12.67px;background:#598527;border-radius:1.6px;box-shadow:inset 0 0 0 0.7px rgba(0,0,0,.06);"></div><div class="r" style="left:655.25px;top:360.98px;width:12.67px;height:12.67px;background:#1a7b30;border-radius:1.6px;box-shadow:inset 0 0 0 0.7px rgba(0,0,0,.06);"></div><div class="r" style="left:670.58px;top:360.98px;width:12.67px;height:12.67px;background:#007236;border-radius:1.6px;box-shadow:inset 0 0 0 0.7px rgba(0,0,0,.06);"></div><div class="r" style="left:685.91px;top:360.98px;width:12.67px;height:12.67px;background:#00746b;border-radius:1.6px;box-shadow:inset 0 0 0 0.7px rgba(0,0,0,.06);"></div><div class="r" style="left:701.24px;top:360.98px;width:12.67px;height:12.67px;background:#0076a3;border-radius:1.6px;box-shadow:inset 0 0 0 0.7px rgba(0,0,0,.06);"></div><div class="r" style="left:716.57px;top:360.98px;width:12.67px;height:12.67px;background:#004b80;border-radius:1.6px;box-shadow:inset 0 0 0 0.7px rgba(0,0,0,.06);"></div><div class="r" style="left:731.90px;top:360.98px;width:12.67px;height:12.67px;background:#003471;border-radius:1.6px;box-shadow:inset 0 0 0 0.7px rgba(0,0,0,.06);"></div><div class="r" style="left:747.23px;top:360.98px;width:12.67px;height:12.67px;background:#1b1464;border-radius:1.6px;box-shadow:inset 0 0 0 0.7px rgba(0,0,0,.06);"></div><div class="r" style="left:762.56px;top:360.98px;width:12.67px;height:12.67px;background:#440e62;border-radius:1.6px;box-shadow:inset 0 0 0 0.7px rgba(0,0,0,.06);"></div><div class="r" style="left:777.89px;top:360.98px;width:12.67px;height:12.67px;background:#630460;border-radius:1.6px;box-shadow:inset 0 0 0 0.7px rgba(0,0,0,.06);"></div><div class="r" style="left:793.22px;top:360.98px;width:12.67px;height:12.67px;background:#9e005d;border-radius:1.6px;box-shadow:inset 0 0 0 0.7px rgba(0,0,0,.06);"></div><div class="r" style="left:808.55px;top:360.98px;width:12.67px;height:12.67px;background:#9e0039;border-radius:1.6px;box-shadow:inset 0 0 0 0.7px rgba(0,0,0,.06);"></div><div class="r" style="left:670.18px;top:314.69px;width:13.37px;height:13.27px;border:1.5px solid #151515;border-radius:2px;box-sizing:border-box;background:#fff;box-shadow:inset 0 0 0 0.8px #fff"></div><div class="r" style="left:672.68px;top:316.99px;width:8.07px;height:8.17px;background:#8ed1a8"></div><div class="r" style="left:578.40px;top:383.70px;width:66.50px;height:21.10px;background:#ffbe98;border-radius:2.5px;border:1px solid #f5b08a;box-sizing:border-box"></div><div class="t" style="left:667.70px;top:390.56px;font-size:8.67px;line-height:8.67px;color:#80868d;font-weight:normal;">Указать код цвета</div><div class="r" style="left:667.50px;top:398.90px;width:72.20px;height:0.80px;background:repeating-linear-gradient(90deg,#c2c6ca 0 1.5px,transparent 1.5px 3px)"></div><div class="t" style="left:762.40px;top:390.56px;font-size:8.67px;line-height:8.67px;color:#80868d;font-weight:normal;">По умолчанию</div><div class="r" style="left:762.30px;top:398.90px;width:58.70px;height:0.80px;background:repeating-linear-gradient(90deg,#c2c6ca 0 1.5px,transparent 1.5px 3px)"></div>
</body></html>
